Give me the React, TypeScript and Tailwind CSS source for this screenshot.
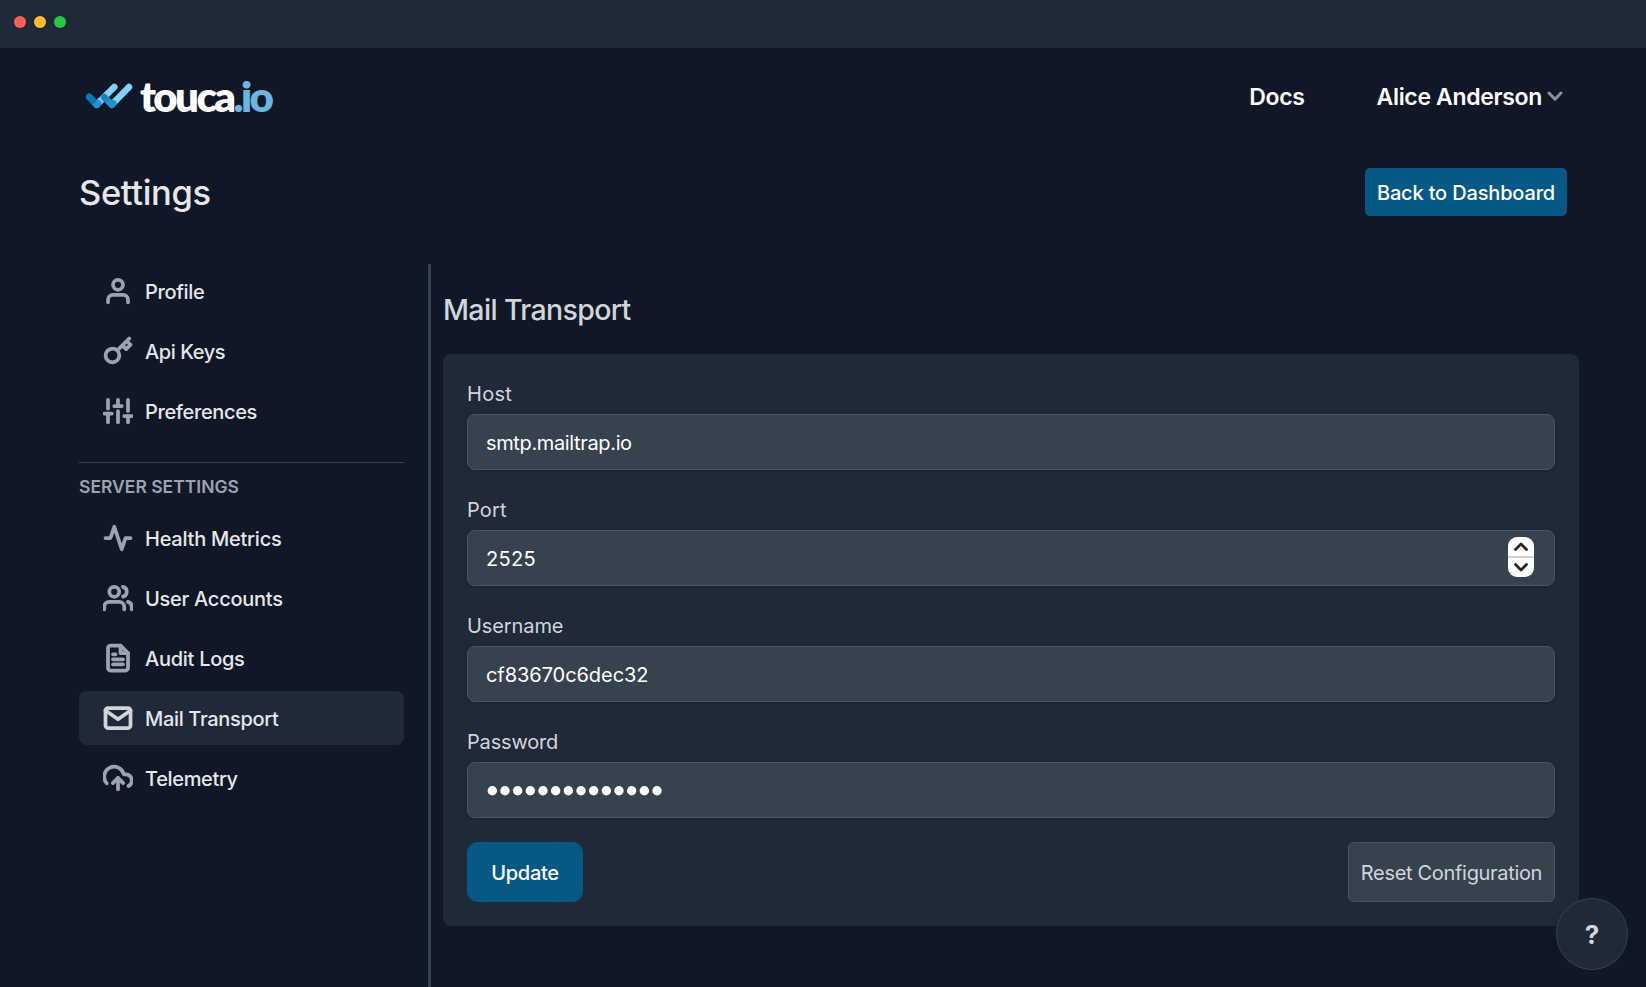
import type { ComponentType, ReactNode } from "react";
import {
  FiActivity,
  FiFileText,
  FiKey,
  FiMail,
  FiSliders,
  FiUploadCloud,
  FiUser,
  FiUsers,
} from "react-icons/fi";

type IconType = ComponentType<{ className?: string; strokeWidth?: number }>;

type NavItem = {
  label: string;
  icon: IconType;
  tracking: string;
  active?: boolean;
};

const accountItems: NavItem[] = [
  { label: "Profile", icon: FiUser, tracking: "tracking-[-0.35px]" },
  { label: "Api Keys", icon: FiKey, tracking: "tracking-[-0.42px]" },
  { label: "Preferences", icon: FiSliders, tracking: "tracking-[-0.36px]" },
];

const serverItems: NavItem[] = [
  { label: "Health Metrics", icon: FiActivity, tracking: "tracking-[-0.24px]" },
  { label: "User Accounts", icon: FiUsers, tracking: "tracking-[-0.26px]" },
  { label: "Audit Logs", icon: FiFileText, tracking: "tracking-[-0.27px]" },
  { label: "Mail Transport", icon: FiMail, tracking: "tracking-[-0.33px]", active: true },
  { label: "Telemetry", icon: FiUploadCloud, tracking: "tracking-[-0.35px]" },
];

function TitleBar() {
  return (
    <div className="flex h-12 shrink-0 items-start gap-2 bg-[#202937] pt-4 pl-3.5">
      <span className="size-3 rounded-full bg-[#ff5f57]" />
      <span className="size-3 rounded-full bg-[#febc2e]" />
      <span className="size-3 rounded-full bg-[#28c840]" />
    </div>
  );
}

function Logo() {
  return (
    <a className="flex h-12 items-center pl-[6px]">
      <svg className="h-[26px] w-[48px]" viewBox="0 0 48 26" fill="none" strokeWidth="6.6" strokeLinecap="round">
        <path d="M11.7 21.7 L29.3 4" stroke="#7dd3fc" />
        <path d="M26.7 21.7 L44 4" stroke="#7dd3fc" />
        <path d="M4.3 14 L11.7 21.7 L13.2 20.2" stroke="#2490d4" strokeLinejoin="round" />
        <path d="M4.3 14 L7.6 17.4" stroke="#0b77b9" />
        <path d="M19 14 L26.7 21.7 L28.2 20.2" stroke="#2490d4" strokeLinejoin="round" />
        <path d="M19.4 14.4 L20.6 15.6" stroke="#1a82c6" />
      </svg>
      <span className="-mt-px ml-[7px] font-['Lato',sans-serif] text-[42px] leading-[48px] font-extrabold tracking-[-2.6px] text-white">
        touca<span className="text-[#6bb5e0]">.io</span>
      </span>
    </a>
  );
}

function Header() {
  return (
    <header className="flex items-center justify-between pt-6">
      <Logo />
      <nav className="flex items-center pt-px pr-[4px] text-[23px] leading-8 font-semibold text-white">
        <a className="mr-[72px] tracking-[-0.3px]">Docs</a>
        <a className="flex items-center">
          <span className="tracking-[-0.34px]">Alice Anderson</span>
          <svg className="ml-[5px] h-[11px] w-4" viewBox="0 0 16 11" fill="none">
            <path d="M2 2 L8 8.2 L14 2" stroke="#8b9099" strokeWidth="3" strokeLinecap="round" strokeLinejoin="round" />
          </svg>
        </a>
      </nav>
    </header>
  );
}

function SidebarItem({ label, icon: Icon, tracking, active }: NavItem) {
  return (
    <li
      className={
        active
          ? "flex h-[54px] items-center gap-3 rounded-lg bg-[#202937] pl-6 text-[#e5e7eb]"
          : "flex h-[54px] items-center gap-3 pl-6 text-[#e5e7eb]"
      }
    >
      <Icon
        strokeWidth={3}
        className={active ? "size-[30px] text-[#d1d5db]" : "size-[30px] text-[#9ca3af]"}
      />
      <span className="pt-0.5">
        <span className={tracking}>{label}</span>
      </span>
    </li>
  );
}

function Sidebar() {
  return (
    <aside className="w-[325px] shrink-0 text-[20px] leading-[30px] font-medium">
      <ul className="flex flex-col gap-1.5">
        {accountItems.map((item) => (
          <SidebarItem key={item.label} {...item} />
        ))}
      </ul>
      <div className="mt-6 border-t border-[#37424f] pt-[9px]">
        <h3 className="text-[17.5px] leading-[30px] font-semibold text-[#9ca3af]">SERVER SETTINGS</h3>
        <ul className="mt-[9px] flex flex-col gap-1.5">
          {serverItems.map((item) => (
            <SidebarItem key={item.label} {...item} />
          ))}
        </ul>
      </div>
    </aside>
  );
}

function Field({ label, labelClass, children }: { label: string; labelClass: string; children: ReactNode }) {
  return (
    <div className="mb-[30px]">
      <div className="pb-[9px] text-[20px] leading-[21px] text-[#d1d5db]">
        <span className={labelClass}>{label}</span>
      </div>
      <div className="flex h-14 items-center justify-between rounded-lg border border-[#4b5563] bg-[#37424f] pr-[20px] pl-[18px] text-[20px] text-white shadow-sm">
        {children}
      </div>
    </div>
  );
}

function Stepper() {
  return (
    <div className="-mt-[3px] flex h-10 w-[26px] flex-col overflow-hidden rounded-[9px] bg-white">
      <svg className="h-10 w-[26px]" viewBox="0 0 26 40" fill="none">
        <rect y="19" width="26" height="2" fill="#d4d4d4" />
        <path d="M7.5 12.5 L13 7 L18.5 12.5" stroke="#262626" strokeWidth="2.8" strokeLinecap="round" strokeLinejoin="round" />
        <path d="M7.5 27.5 L13 33 L18.5 27.5" stroke="#262626" strokeWidth="2.8" strokeLinecap="round" strokeLinejoin="round" />
      </svg>
    </div>
  );
}

function PasswordDots() {
  return (
    <svg className="mt-px h-[10px] w-[180px]" viewBox="0 0 180 10" fill="#ffffff">
      {Array.from({ length: 14 }, (_, i) => (
        <circle key={i} cx={6.3 + i * 12.67} cy="4.8" r="4.7" />
      ))}
    </svg>
  );
}

function MailTransport() {
  return (
    <section className="w-[1136px]">
      <h2 className="mt-[26px] text-[28.5px] leading-10 font-medium tracking-[-0.65px] text-[#d1d5db]">Mail Transport</h2>
      <div className="mt-6 h-[572px] rounded-lg bg-[#202937] px-6 pt-[30px]">
        <Field label="Host" labelClass="tracking-[0.3px]">
          <span className="mt-px tracking-[-0.36px]">smtp.mailtrap.io</span>
        </Field>
        <Field label="Port" labelClass="tracking-[0.2px]">
          <span className="mt-px tracking-[0.3px]">2525</span>
          <Stepper />
        </Field>
        <Field label="Username" labelClass="tracking-[-0.1px]">
          <span className="mt-px tracking-[-0.06px]">cf83670c6dec32</span>
        </Field>
        <Field label="Password" labelClass="tracking-[-0.17px]">
          <PasswordDots />
        </Field>
        <div className="-mt-1.5 flex h-[60px] justify-between text-[20px]">
          <button className="w-[116px] rounded-[11px] bg-[#075985] pt-0.5 font-medium tracking-[-0.3px] text-white">
            Update
          </button>
          <button className="w-[207px] rounded-[6px] border border-[#4b5563] bg-[#37424f] pt-0.5 tracking-[-0.32px] text-[#d1d5db]">
            Reset Configuration
          </button>
        </div>
      </div>
    </section>
  );
}

export default function App() {
  return (
    <div className="relative flex h-[987px] w-[1646px] flex-col overflow-hidden bg-[#101726] font-['Inter',sans-serif] antialiased">
      <TitleBar />
      <div className="flex min-h-0 flex-1 flex-col pr-[79px] pl-[79px]">
        <Header />
        <div className="mt-12 flex h-12 items-center justify-between">
          <h1 className="pt-0.5 text-[34.5px] leading-12 font-medium tracking-[-0.35px] text-[#e5e7eb]">Settings</h1>
          <button className="h-12 w-[202px] rounded-[5px] bg-[#075985] pt-0.5 text-[20px] font-medium tracking-[-0.16px] text-white">
            Back to Dashboard
          </button>
        </div>
        <div className="mt-12 flex min-h-0 flex-1">
          <Sidebar />
          <div className="mr-3 ml-6 w-[3px] shrink-0 bg-[#37424f]" />
          <div className="w-[1136px] shrink-0">
            <MailTransport />
          </div>
        </div>
      </div>
      <button className="absolute right-[18px] bottom-[17px] size-[72px] rounded-full border border-[#37424f] bg-[#202937] text-[26px] font-bold text-[#d1d5db]">
        ?
      </button>
    </div>
  );
}
